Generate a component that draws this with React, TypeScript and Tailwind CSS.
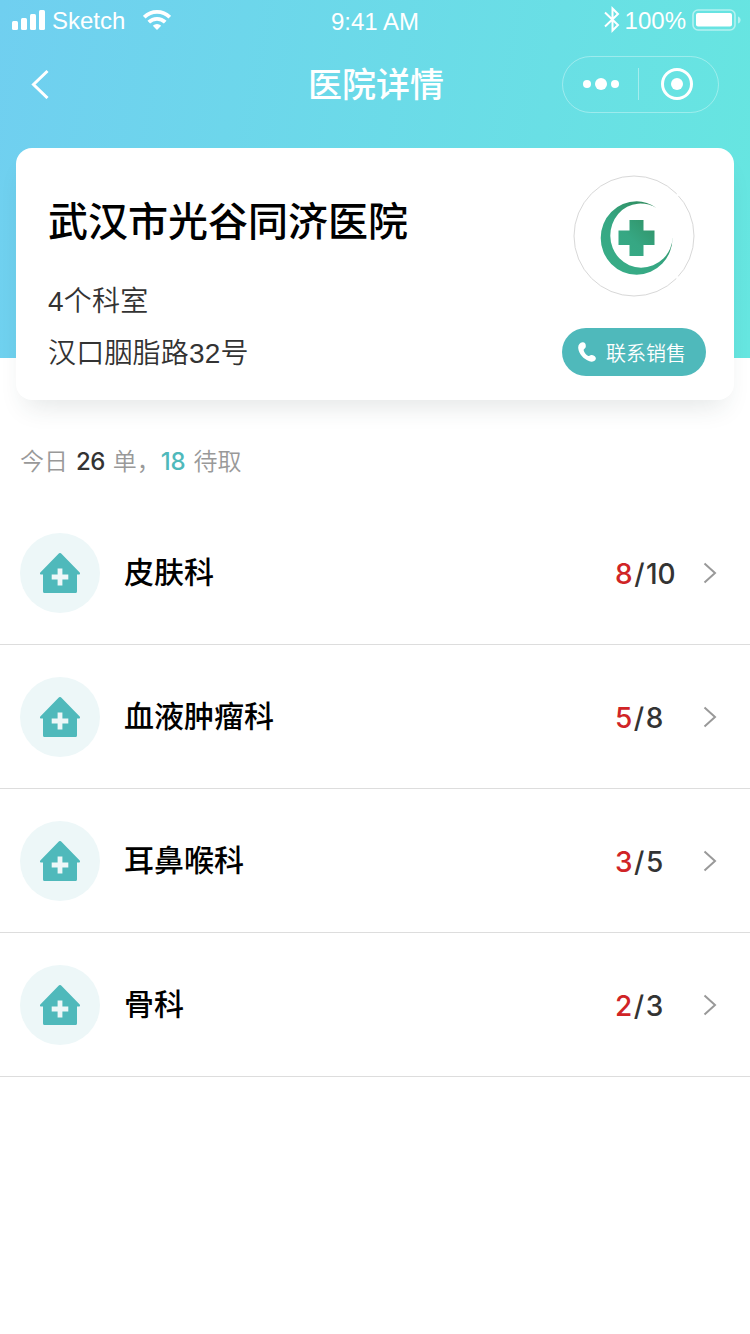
const departments = [
  { name: "皮肤科", pending: 8, total: 10 },
  { name: "血液肿瘤科", pending: 5, total: 8 },
  { name: "耳鼻喉科", pending: 3, total: 5 },
  { name: "骨科", pending: 2, total: 3 },
];

function StatusBar() {
  return (
    <div className="grid h-10 grid-cols-3 items-center pt-0.5 pr-[9px] pl-3 font-['Liberation_Sans',sans-serif] text-2xl leading-6">
      <div className="flex items-center">
        <svg className="-mt-0.5" width="33" height="20" viewBox="0 0 33 20" fill="currentColor">
          <rect x="0" y="11" width="6" height="9" rx="1.5" />
          <rect x="9" y="8" width="6" height="12" rx="1.5" />
          <rect x="18" y="4" width="6" height="16" rx="1.5" />
          <rect x="27" y="0" width="6" height="20" rx="1.5" />
        </svg>
        <span className="ml-[7px]">Sketch</span>
        <svg className="-mt-0.5 ml-[18px]" width="28" height="20" viewBox="0 0 28 20" fill="none" stroke="currentColor" strokeWidth="3.8">
          <path d="M1.2 7.2a18.2 18.2 0 0 1 25.6 0" />
          <path d="M5.8 12.2a11.6 11.6 0 0 1 16.4 0" />
          <path d="M14 20l-4.2-4.2a6 6 0 0 1 8.4 0z" fill="currentColor" stroke="none" />
        </svg>
      </div>
      <span className="pt-0.5 pr-[3px] text-center">9:41 AM</span>
      <div className="flex items-center justify-end">
        <svg className="-mt-1" width="16" height="27" viewBox="0 0 16 27" fill="none" stroke="currentColor" strokeWidth="2">
          <path d="M1 6.500L14 19L8.500 24.500V2.500L14 8L1 20.500" />
        </svg>
        <span className="ml-[5px]">100%</span>
        <svg className="-mt-0.5 ml-1.5" width="49" height="22" viewBox="0 0 49 22">
          <rect x="1" y="1" width="42" height="20" rx="5" fill="none" stroke="#fff" strokeWidth="1.6" opacity=".5" />
          <rect x="4" y="4" width="36" height="13.500" rx="2" fill="#fff" />
          <path d="M46 7.500c3.500 1 3.500 6 0 7z" fill="#fff" opacity=".5" />
        </svg>
      </div>
    </div>
  );
}

function NavBar() {
  return (
    <div className="grid h-[88px] grid-cols-3 items-center pr-[31px] pl-[30px]">
      <svg width="20" height="30" viewBox="0 0 20 30" fill="none" stroke="#fff" strokeWidth="3">
        <path d="M17.500 2L3.500 15.500L17.500 29" />
      </svg>
      <h1 className="pt-0.5 pl-[3px] text-center text-[34px] leading-[48px] font-medium whitespace-nowrap">医院详情</h1>
      <div className="flex h-[57px] w-[157px] items-center justify-self-end rounded-full border border-white/35">
        <div className="flex flex-1 items-center justify-center gap-1">
          <i className="size-2 rounded-full bg-white" />
          <i className="size-3 rounded-full bg-white" />
          <i className="size-2 rounded-full bg-white" />
        </div>
        <div className="h-8 w-px bg-white/40" />
        <div className="flex flex-1 justify-center pr-1">
          <div className="flex size-8 items-center justify-center rounded-full border-3 border-white">
            <i className="size-3 rounded-full bg-white" />
          </div>
        </div>
      </div>
    </div>
  );
}

function HospitalLogo() {
  return (
    <svg width="122" height="122" viewBox="573 175 122 122">
      <defs>
        <linearGradient id="leaf" x1="605" y1="265" x2="655" y2="210" gradientUnits="userSpaceOnUse">
          <stop offset="0" stopColor="#38ad87" />
          <stop offset=".5" stopColor="#36a783" />
          <stop offset="1" stopColor="#2f8c5f" />
        </linearGradient>
      </defs>
      <circle cx="634" cy="236" r="60" fill="#fff" stroke="#d8d8d8" />
      <circle cx="678" cy="194.500" r="1.500" fill="#fff" />
      <circle cx="677.500" cy="277.500" r="1.500" fill="#fff" />
      <path
        d="M656.500 208Q647 201.300 636.700 201.300A36 36.700 0 0 0 636.700 274.700A36 36.700 0 0 0 672.500 237A32 30.500 0 0 1 641 267.700A31 32 0 0 1 610.300 236A30 32 0 0 1 638 203.700Q648 203 656.500 208Z"
        fill="url(#leaf)"
      />
      <path d="M629.500 220H643.500V230.500H654.500V245H643.500V256H629.500V245H618.500V230.500H629.500Z" fill="url(#leaf)" />
    </svg>
  );
}

function PhoneIcon() {
  return (
    <svg width="18" height="20" viewBox="0 0 18 20" fill="currentColor">
      <path d="M4.500.3C6.500 0 8 1.500 7.800 4.500C7.700 6.500 5.800 6.600 5.600 8C6 10.500 8 12.800 10.300 14C11.600 14.200 12 12.600 14 13C16.500 13.600 18.200 15.200 17.800 17C17 19.300 14 20.200 11.500 19.300C5.500 17 .8 12 .2 6C0 3 1.800.7 4.500.3Z" />
    </svg>
  );
}

function HospitalCard() {
  return (
    <section className="mx-4 mt-5 flex h-[252px] justify-between rounded-2xl bg-white pr-7 pl-8 shadow-[0_16px_26px_-10px_rgba(40,60,65,0.13)]">
      <div className="pt-[46px] text-[28px] leading-[40px] tracking-[0.2px] text-[#333]">
        <h2 className="text-[40px] leading-[56px] font-medium tracking-normal text-black">武汉市光谷同济医院</h2>
        <p className="mt-8 font-[350]">4个科室</p>
        <p className="mt-3 font-[350]">汉口胭脂路32号</p>
      </div>
      <div className="flex flex-col items-center pt-[27px]">
        <HospitalLogo />
        <button className="mt-[31px] flex h-12 w-36 items-center rounded-full bg-[#4fb9bb] pl-4 text-xl text-white">
          <PhoneIcon />
          <span className="ml-2.5 pt-[3px] font-[350]">联系销售</span>
        </button>
      </div>
    </section>
  );
}

function HouseIcon() {
  return (
    <div className="flex size-20 items-center justify-center rounded-full bg-[#edf7f8]">
      <svg width="40" height="40" viewBox="0 0 40 40">
        <path
          d="M18.800.5a1.800 1.800 0 0 1 2.400 0L39.700 19.500c.6.900.3 2-.8 2H37V38.500a1.500 1.500 0 0 1-1.500 1.500h-31A1.500 1.500 0 0 1 3 38.500V21.500H1.100c-1.100 0-1.400-1.100-.8-2z"
          fill="#4fb9bb"
        />
        <path d="M20 15.500v17M11.700 24h16.600" stroke="#edf7f8" strokeWidth="4.800" />
      </svg>
    </div>
  );
}

export default function App() {
  return (
    <div className="min-h-[1334px] w-[750px] bg-white font-['Liberation_Sans','Noto_Sans_CJK_SC',sans-serif]">
      <header className="h-[358px] bg-linear-[100deg] from-[#70cff0] to-[#66e6e0] text-white">
        <StatusBar />
        <NavBar />
        <HospitalCard />
      </header>

      <p className="mt-[84px] flex h-10 items-center pl-5 text-2xl font-[350] text-[#999]">
        今日
        <b className="mr-2 ml-2 font-['Inter',sans-serif] text-2xl font-medium tracking-[-0.6px] text-[#333]">26</b>
        单，
        <b className="mr-2 font-['Inter',sans-serif] text-2xl font-medium tracking-[-0.2px] text-[#4fb9bb]">18</b>
        待取
      </p>

      <ul className="mt-[19px]">
        {departments.map((item) => (
          <li key={item.name} className="flex h-36 items-center border-b border-[#ddd] pr-8 pl-5">
            <HouseIcon />
            <span className="ml-6 flex-1 text-[30px] leading-[42px] font-medium text-black">{item.name}</span>
            <span className="w-[88px] pt-0.5 pl-px font-['Inter',sans-serif] text-[28px] font-[450] text-[#333]">
              <span className="text-[#d02426]">{item.pending}</span>
              <span className="mx-[1.5px]">/</span>
              {item.total}
            </span>
            <svg width="16" height="22" viewBox="0 0 16 22" fill="none" stroke="#999" strokeWidth="2">
              <path d="M2.500 1.500L13 11L2.500 20.500" />
            </svg>
          </li>
        ))}
      </ul>
    </div>
  );
}
